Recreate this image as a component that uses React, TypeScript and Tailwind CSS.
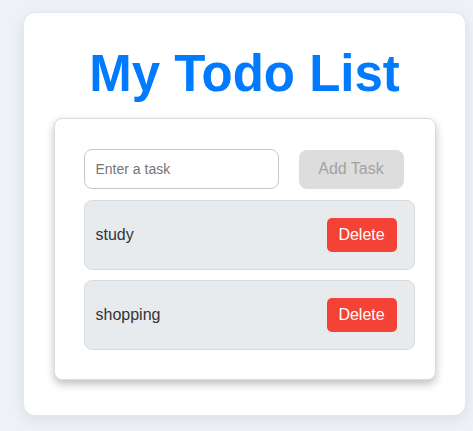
import React from "react";

export default function App() {
  const tasks = ["study", "shopping"];
  return (
    <div className="min-h-screen bg-[#eef2f7] pt-3 pl-[23px] font-['Liberation_Sans',Arial,sans-serif]">
      <div className="w-[443px] h-[404px] bg-white rounded-xl border border-[#e3e6ea] shadow-[0_4px_14px_rgba(0,0,0,0.08)] pt-[36px] flex flex-col items-center">
        <h1 className="text-[51px] leading-[50px] font-bold text-[#007bff]">My Todo List</h1>
        <div className="mt-[19px] w-[382px] bg-white rounded-lg border border-[#dcdcdc] shadow-[0_4px_8px_rgba(0,0,0,0.25)] pt-[30px] pl-[29px] pb-[29px]">
          <div className="flex items-center gap-[20px] h-[40px]">
            <input
              type="text"
              placeholder="Enter a task"
              className="w-[195px] h-[40px] rounded-lg border border-[#c8c8c8] px-[11px] text-[14px] text-[#333] placeholder:text-[#757575] outline-none"
            />
            <button className="w-[105px] h-[39px] rounded-lg bg-[#dddddd] text-[16px] text-[#a3a3a3]">Add Task</button>
          </div>
          <div className="mt-[11px] flex flex-col gap-[10px]">
            {tasks.map((t) => (
              <div
                key={t}
                className="w-[331px] h-[70px] rounded-lg bg-[#e8ebee] border border-[#d9dcdf] flex items-center justify-between pl-[11px] pr-[17px]"
              >
                <span className="text-[16px] text-[#333]">{t}</span>
                <button className="w-[70px] h-[34px] rounded-[5px] bg-[#f44336] text-white text-[16px]">Delete</button>
              </div>
            ))}
          </div>
        </div>
      </div>
    </div>
  );
}
